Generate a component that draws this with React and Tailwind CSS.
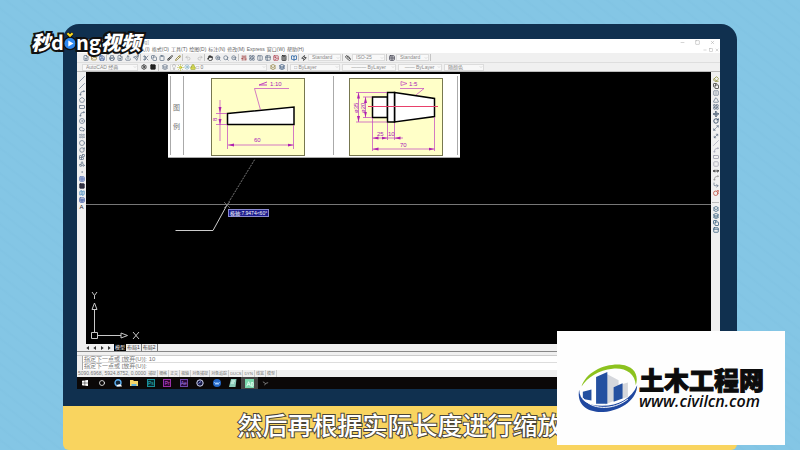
import React from "react";
import {
  FilePlus, FolderOpen, Save, Printer, FileSearch, Upload, Send, Scissors, Copy, Clipboard, Brush, Pencil,
  Undo2, Redo2, Hand, ZoomIn, Search, ZoomOut, Sliders, LayoutGrid, Table2, Columns2, Image, Calculator,
  BookOpen, Ruler, Settings, Layers, Lightbulb, Sun, Lock, Slash, Spline, Pentagon, RectangleHorizontal,
  Circle, Cloud, Waves, Shapes, Dot, Grid3x3, Square, Map, Sheet, Eraser, Triangle, FlipHorizontal, Move,
  RotateCw, Maximize2, MoveDiagonal, SquareDashed, CornerDownRight, Bomb, Minus, X, ChevronDown, Zap,
  MoveHorizontal, Layers2, PanelTop, Blocks, Grid2x2, CircleDot,
} from "lucide-react";

const cjk = "font-['Liberation_Sans','Noto_Sans_CJK_SC',sans-serif]";

function Tool({ icon: Icon, label, color = "text-[#66758a]" }) {
  return (
    <button type="button" aria-label={label} className={`flex h-[7px] w-[7px] shrink-0 items-center justify-center ${color}`}>
      <Icon className="size-[6px]" strokeWidth={3} />
    </button>
  );
}

function Divider() {
  return <span className="h-[7px] w-px shrink-0 bg-[#c4c4c4]" />;
}

function Combo({ label, value, width, center }) {
  return (
    <label className={`flex h-[7px] items-center border border-[#dcdcdc] bg-[#f8f8f8] ${width}`}>
      <select
        aria-label={label}
        className={`h-[5px] min-w-0 flex-1 appearance-none bg-transparent pl-[3px] text-[5px] leading-[5px] text-[#8a8a8a] ${center ? "text-center" : ""}`}
      >
        <option>{value}</option>
      </select>
      <ChevronDown className="size-[4px] text-[#aaa]" />
    </label>
  );
}

const menus = ["插入(I)", "格式(O)", "工具(T)", "绘图(D)", "标注(N)", "修改(M)", "Express", "窗口(W)", "帮助(H)"];

const drawTools = [
  [Slash, "直线"], [Slash, "构造线"], [Spline, "多段线"], [Pentagon, "正多边形"], [RectangleHorizontal, "矩形"],
  [Spline, "圆弧"], [CircleDot, "圆"], [Cloud, "修订云线"], [Waves, "样条曲线"], [Circle, "椭圆"], [RotateCw, "椭圆弧"],
  [Blocks, "插入块"], [Shapes, "创建块"], [Dot, "点"], [Grid3x3, "图案填充", "text-[#5c78b8]"], [Square, "渐变色", "text-[#223] [&_svg]:fill-[#334]"],
  [Map, "面域", "text-[#4a8cc0]"], [Sheet, "表格", "text-[#4560a8]"],
];

const modifyTools = [
  [Eraser, "删除", "text-[#8a8a30]"], [Copy, "复制", "text-[#333]"], [FlipHorizontal, "镜像"], [Triangle, "偏移"], [LayoutGrid, "阵列"],
  [Move, "移动", "text-[#1c3450]"], [RotateCw, "旋转", "text-[#1c3450]"], [Maximize2, "缩放"], [MoveDiagonal, "拉伸"], [Slash, "修剪", "text-[#aab]"],
  [Spline, "延伸", "text-[#aab]"], [RectangleHorizontal, "打断于点", "text-[#99a]"], [SquareDashed, "打断", "text-[#99a]"],
  [MoveHorizontal, "合并", "text-black"], [Spline, "倒角", "text-[#999]"], [CornerDownRight, "圆角"], [Bomb, "分解", "text-[#c04a3a]"],
];

const orderTools = [[Layers2, "前置"], [Layers, "后置"], [Copy, "置于对象之上"], [PanelTop, "置于对象之下"]];

function TitleAndMenu() {
  return (
    <header className="bg-white">
      <div className="flex h-[7px] items-center justify-between pl-16 pr-[5px] text-[5px] leading-[7px] text-[#999]">
        <span>wg]</span>
        <span className="flex gap-[10px]">
          <button type="button" aria-label="最小化"><Minus className="size-[5px]" /></button>
          <button type="button" aria-label="最大化"><Square className="size-[5px]" /></button>
          <button type="button" aria-label="关闭"><X className="size-[5px]" /></button>
        </span>
      </div>
      <div className="flex h-[7px] items-center justify-between pl-[58px] pr-px text-[5px] leading-[7px] text-[#666]">
        <nav className="flex gap-[2px]">
          {menus.map((m) => <button type="button" key={m}>{m}</button>)}
        </nav>
        <span className="flex gap-[2px] text-[#888]">
          <button type="button" aria-label="最小化图形"><Minus className="size-[4px]" /></button>
          <button type="button" aria-label="还原图形"><Square className="size-[4px]" /></button>
          <button type="button" aria-label="关闭图形"><X className="size-[4px]" /></button>
        </span>
      </div>
    </header>
  );
}

function Toolbars() {
  return (
    <div className="border-b border-[#bbb] bg-[#f0f0f0]">
      <div className="flex h-[10px] items-center gap-px border-b border-[#dedede] pl-[5px]">
        <Tool icon={FilePlus} label="新建" />
        <Tool icon={FolderOpen} label="打开" color="text-[#a38a3a]" />
        <Tool icon={Save} label="保存" color="text-[#3c5c9c]" />
        <Divider />
        <Tool icon={Printer} label="打印" />
        <Tool icon={FileSearch} label="打印预览" />
        <Tool icon={Upload} label="发布" />
        <Tool icon={Send} label="三维DWF" />
        <Divider />
        <Tool icon={Scissors} label="剪切" />
        <Tool icon={Copy} label="复制" />
        <Tool icon={Clipboard} label="粘贴" />
        <Tool icon={Brush} label="特性匹配" color="text-[#222]" />
        <Tool icon={Pencil} label="块编辑器" color="text-[#8a7a20]" />
        <Divider />
        <Tool icon={Undo2} label="放弃" color="text-[#bbb]" />
        <span className="w-[3px]" />
        <Tool icon={Redo2} label="重做" color="text-[#bbb]" />
        <Divider />
        <Tool icon={Hand} label="平移" color="text-[#222]" />
        <Tool icon={ZoomIn} label="实时缩放" />
        <Tool icon={Search} label="窗口缩放" />
        <Tool icon={ZoomOut} label="上一个" />
        <Divider />
        <Tool icon={Sliders} label="特性" color="text-[#a04040]" />
        <Tool icon={LayoutGrid} label="设计中心" />
        <Tool icon={Columns2} label="工具选项板" />
        <Tool icon={Table2} label="图纸集" />
        <Tool icon={Image} label="标记集" color="text-[#b04050]" />
        <Tool icon={Calculator} label="计算器" color="text-[#222]" />
        <Divider />
        <Tool icon={BookOpen} label="帮助" color="text-[#1d5ca0]" />
        <Divider />
        <Tool icon={Zap} label="文字样式" color="text-[#222]" />
        <Combo label="文字样式" value="Standard" width="w-[33px]" />
        <Divider />
        <Tool icon={Ruler} label="标注样式" color="text-[#222]" />
        <Combo label="标注样式" value="ISO-25" width="w-[33px]" />
        <Divider />
        <Tool icon={Grid2x2} label="表格样式" color="text-[#334]" />
        <Combo label="表格样式" value="Standard" width="w-[33px]" />
        <Divider />
      </div>
      <div className="flex h-[8px] items-center gap-[2px] pl-[5px]">
        <Combo label="工作空间" value="AutoCAD 经典" width="w-[56px]" />
        <Tool icon={Settings} label="工作空间设置" color="text-[#222]" />
        <Tool icon={Square} label="我的工作空间" color="text-[#222] [&_svg]:fill-[#222]" />
        <Divider />
        <Tool icon={Layers} label="图层特性" />
        <div className="flex h-[7px] w-[97px] items-center border border-[#dcdcdc] bg-[#f8f8f8]">
          <Lightbulb className="size-[6px] text-[#999]" />
          <Sun className="size-[7px] fill-[#e6e04a] text-[#a8b020]" />
          <Sun className="size-[6px] text-[#4a90b0]" />
          <Lock className="size-[6px] fill-[#d8d850] text-[#8a9a30]" />
          <label className="flex h-[5px] flex-1 items-center">
            <select aria-label="图层" className="h-[5px] flex-1 appearance-none bg-transparent text-[5px] leading-[5px] text-[#777]">
              <option>□ 0</option>
            </select>
            <ChevronDown className="size-[4px] text-[#aaa]" />
          </label>
        </div>
        <Tool icon={Layers2} label="置为当前" color="text-[#8a7a30]" />
        <Tool icon={Layers} label="上一个图层" color="text-[#2c4c74]" />
        <Divider />
        <Combo label="颜色" value="□ ByLayer" width="w-[50px]" />
        <Combo label="线型" value="——— ByLayer" width="w-[54px]" center />
        <Combo label="线宽" value="—— ByLayer" width="w-[44px]" center />
        <Combo label="打印样式" value="随颜色" width="w-[40px]" />
      </div>
    </div>
  );
}

function ReferenceDrawing() {
  return (
    <svg viewBox="0 0 292 84" className="absolute left-[82px] top-[2px] h-[84px] w-[292px]" fontFamily="Liberation Sans, Noto Sans CJK SC, sans-serif">
      <defs>
        <marker id="tip" viewBox="0 0 6 4" refX="6" refY="2" markerWidth="6" markerHeight="4" markerUnits="userSpaceOnUse" orient="auto-start-reverse">
          <path d="M0 0.5 6 2 0 3.5Z" fill="#b020b0" />
        </marker>
      </defs>
      <rect width="292" height="84" fill="#fff" />
      <path d="M0 83.5H292M2.5 2V81M15.5 2V81M165.5 2V81M289.5 2V81" stroke="#aaa" fill="none" />
      <g fontSize="7" fill="#777"><text x="5" y="36">图</text><text x="5" y="55">例</text></g>
      <g fill="#ffffc8" stroke="#77774f">
        <rect x="43.5" y="4.5" width="93" height="77" />
        <rect x="181.5" y="4.5" width="93" height="77" />
      </g>
      <g fill="#fff" stroke="#000" strokeWidth="1.5">
        <path d="M59.5 39.5 126 33V50.5H59.5Z" />
        <path d="M204.5 23H219.5V43.5H204.5Z" />
        <path d="M226.5 18.5 266.5 24.5V42.5L226.5 48Z" />
        <path d="M219.5 18.5H226.5V48H219.5Z" />
      </g>
      <path d="M200 32.5H270" stroke="#e8406a" />
      <g fill="none" stroke="#c040c0" strokeWidth="0.7">
        <path d="M121 14.5H86.5L92.5 36M48 39.5H59M48 50.5H59M59.5 51V75M125.5 51V75" />
        <path d="M52 26V39" markerEnd="url(#tip)" />
        <path d="M52 67V51M52 39V51" markerEnd="url(#tip)" />
        <path d="M60 71H125.5" markerStart="url(#tip)" markerEnd="url(#tip)" />
        <path d="M99 8 91 11H99" strokeWidth="1" />
        <path d="M232 14.5H256L248 21M188 18.5H219M188 48H219M195 23H204M195 43.5H204M204.5 44V77M219.5 49V66M226.5 49V66M266.5 43V77" />
        <path d="M190.5 18.5V48" markerStart="url(#tip)" markerEnd="url(#tip)" />
        <path d="M197.5 23V43.5" markerStart="url(#tip)" markerEnd="url(#tip)" />
        <path d="M204.5 64H219.5" markerStart="url(#tip)" markerEnd="url(#tip)" />
        <path d="M235 64H226.5" markerEnd="url(#tip)" />
        <path d="M219.5 64H226.5" />
        <path d="M204.5 75H266.5" markerStart="url(#tip)" markerEnd="url(#tip)" />
        <path d="M233 7.5V11.5L239 9.5Z" />
      </g>
      <g fill="#a818b8" fontSize="6">
        <text x="102" y="12">1:10</text>
        <text x="86" y="68">60</text>
        <text x="241" y="12">1:5</text>
        <text x="209" y="62">25</text>
        <text x="220" y="62">10</text>
        <text x="232" y="73">70</text>
        <text transform="translate(49 47) rotate(-90)">8</text>
        <text transform="translate(190 39) rotate(-90)">ø35</text>
        <text transform="translate(197 39) rotate(-90)">ø20</text>
      </g>
    </svg>
  );
}

function Canvas() {
  return (
    <main className="relative min-w-0 flex-1 overflow-hidden bg-black">
      <div className="absolute left-0 top-[132px] h-px w-full bg-[#777]" />
      <svg viewBox="0 0 200 170" className="absolute left-0 top-0 h-[170px] w-[200px]" fill="none">
        <path d="M89.500 158.500H127L141 133" stroke="#ccc" />
        <path d="M141 133 169 87" stroke="#777" strokeDasharray="2 1" />
        <path d="M138 130 144 136M144 130 138 136" stroke="#888" strokeWidth="0.7" />
      </svg>
      <ReferenceDrawing />
      <output className="absolute left-[142px] top-[137px] flex h-[8px] items-center whitespace-nowrap border border-[#8a8ad0] bg-[#1c1c8c] px-px text-[5px] leading-[6px] text-white">
        极轴:7.9474&lt;60°
      </output>
      <svg viewBox="0 0 60 54" className="absolute bottom-0 left-0 h-[54px] w-[60px]" fill="none" stroke="#c8c8c8">
        <path d="M5.500 42.500H11.500V48.500H5.500ZM8.500 42V19M12 45.500H35M6 19.500 8.500 13 11 19.500ZM35 43 41.500 45.500 35 48Z" />
        <path d="M6 2 8.500 5.500 11 2M8.500 5.500V9M47 42 53 49M53 42 47 49" />
      </svg>
    </main>
  );
}

function CommandArea() {
  return (
    <footer className="bg-[#f0f0f0] text-[#777]">
      <div className="flex h-[7px] items-center gap-[3px] pl-[9px] text-[5px] leading-[7px] text-[#333]">
        <span className="flex gap-[3px]">
          {["M4 0 0 3 4 6ZM4 1V5", "M4 0 0 3 4 6Z", "M1 0 5 3 1 6Z", "M1 0 5 3 1 6ZM1 1V5"].map((d, i) => (
            <button type="button" key={d} aria-label={`切换布局 ${i + 1}`}>
              <svg viewBox="0 0 5 6" className="size-[4px]" fill="#333"><path d={d} /></svg>
            </button>
          ))}
        </span>
        <span className="flex">
          <button type="button" className="bg-black px-px text-white">模型</button>
          <button type="button" className="border-r border-[#777] px-px">布局1</button>
          <button type="button" className="border-r border-[#777] px-px">布局2</button>
        </span>
      </div>
      <div className="h-[5px] border-b border-t border-b-[#ccc] border-t-[#888]" />
      <div className="ml-[5px] border-l border-[#aaa] bg-white text-[6px]">
        <p className="h-[7px] border-b border-[#ddd] pl-px leading-[6px]">指定下一点或 [放弃(U)]: 10</p>
        <input aria-label="命令行" defaultValue="指定下一点或 [放弃(U)]:" className="block h-[7px] w-full pl-px leading-[7px] outline-none" />
      </div>
      <div className="flex h-[7px] items-center gap-px pl-px text-[5px] leading-[7px]">
        <span className="whitespace-nowrap">5090.6968, 5924.8752, 0.0000</span>
        <span className="flex text-[4px]">
          {["捕捉", "栅格", "正交", "极轴", "对象捕捉", "对象追踪", "DUCS", "DYN", "线宽", "模型"].map((s) => (
            <button type="button" key={s} className="whitespace-nowrap border-r border-[#ccc] px-px">{s}</button>
          ))}
        </span>
      </div>
    </footer>
  );
}

function Adobe({ name, color }) {
  return <span className={`flex h-[8px] w-[8px] items-center justify-center border text-[5px] leading-[6px] ${color}`}>{name}</span>;
}

function Taskbar() {
  const apps = [
    ["开始", <svg viewBox="0 0 8 8" className="size-[6px]"><path fill="#fff" d="M0 1 3.600.5V3.700H0ZM4.200.4 8 0V3.700H4.200ZM0 4.300H3.600V7.500L0 7ZM4.200 4.300H8V8L4.200 7.600Z" /></svg>],
    ["搜索", <Circle className="size-[6px] text-white" strokeWidth={3} />],
    ["QQ浏览器", <svg viewBox="0 0 8 8" className="size-[8px]"><circle cx="4" cy="3.800" r="3" fill="#123" stroke="#5aaef0" strokeWidth="1.400" /><path d="M2.500 7.500Q2.800 5 5 5.500 7 4.800 8 7.500Z" fill="#fff" /></svg>],
    ["文件资源管理器", <svg viewBox="0 0 8 8" className="size-[8px]"><path d="M0 1H3L4 2H8V7H0Z" fill="#f4d568" /><path d="M1.500 5H6.500V7H1.500Z" fill="#5eb0dc" /></svg>],
    ["Photoshop", <Adobe name="Ps" color="border-[#1b8f98] bg-[#06282e] text-[#2cb5bd]" />],
    ["Premiere", <Adobe name="Pr" color="border-[#9a30a8] bg-[#2a0630] text-[#d050dd]" />],
    ["After Effects", <Adobe name="Ae" color="border-[#7048a8] bg-[#26083c] text-[#b080e8]" />],
    ["Cinema 4D", <svg viewBox="0 0 8 8" className="size-[8px]"><circle cx="4" cy="4" r="3.200" fill="#181b48" stroke="#d4d8f0" /><path d="M2.500 4.500 5 2.500" stroke="#8590e0" /></svg>],
    ["WPS", <svg viewBox="0 0 8 8" className="size-[8px]"><circle cx="4" cy="4" r="4" fill="#2468c8" /><path d="M1.500 3 3 5.500 4 3.500 5 5.500 6.500 3" stroke="#a8d0ff" fill="none" /></svg>],
    ["记事本", <svg viewBox="0 0 8 8" className="size-[8px]"><path d="M2 0H7.500L6.500 8H0Z" fill="#8bcab8" /><path d="M2.500 2H6M2 4H5" stroke="#e4fff6" /></svg>],
    ["AutoCAD", <svg viewBox="0 0 10 10" className="size-[9px]"><path d="M0 0H10V10H0Z" fill="#79d8ac" /><path d="M2 8 4 3 6 8M3 6H5.500M7 4V8H9V4Z" stroke="#eafff4" fill="none" /></svg>],
    ["录制", <svg viewBox="0 0 8 8" className="size-[7px]"><path d="M1 2 4 4 7 3M4 4 3 6" stroke="#888" fill="none" /></svg>],
  ];
  return (
    <div className="h-[12px] bg-[#0b0808]">
      <div className="grid h-full w-[197px] grid-cols-12">
        {apps.map(([name, icon]) => (
          <button type="button" key={name} aria-label={name} className={`flex items-center justify-center ${name === "AutoCAD" ? "bg-[#444]" : ""}`}>
            {icon}
          </button>
        ))}
      </div>
    </div>
  );
}

function VideoLogo() {
  return (
    <div className="absolute left-[31px] top-[29px] flex items-center whitespace-nowrap font-['Noto_Sans_CJK_SC',sans-serif] text-[20px] font-bold leading-[26px] text-white [-webkit-text-stroke:4px_#111] [paint-order:stroke_fill]">
      <span className="font-black italic">秒</span>
      <span>d</span>
      <svg viewBox="0 0 14 20" className="-mt-1 h-[20px] w-[12px] overflow-visible" role="img" aria-label="o" stroke="none">
        <circle cx="7" cy="14" r="8" fill="#111" />
        <circle cx="7" cy="14" r="6.500" fill="#2e88f0" />
        <path d="M5 10.500V17.500L11 14Z" fill="#fff" />
        <path d="M4 2 7 5 10 2" fill="none" stroke="#111" strokeWidth="4" />
        <path d="M4 2 7 5 10 2" fill="none" stroke="#f8d820" strokeWidth="2.500" />
      </svg>
      <span>ng</span>
      <span className="font-black italic">视频</span>
    </div>
  );
}

function SiteCard() {
  return (
    <a href="#civilcn" className="absolute bottom-[5px] right-[15px] flex h-[114px] w-[228px] items-center gap-px bg-[#fefefe] pl-[21px] text-[#0c0c0c]">
      <svg viewBox="0 0 180 148" className="h-[49px] w-[60px] shrink-0" aria-hidden="true">
        <path d="M81 27 122 49V106L81 122Z" fill="#d5d7dc" />
        <path d="M130 62 150 56V100L130 106Z" fill="#d5d7dc" />
        <path d="M14 84 40 77V110L14 106Z" fill="#2450a0" />
        <path d="M54 39 88 24V120H54Z" fill="#2450a0" />
        <path d="M107 70 134 58V104L107 114Z" fill="#2450a0" />
        <path d="M10 68C24 24 80-2 130 2 168 6 184 32 174 64 172 28 142 10 104 14 62 18 28 40 10 68Z" fill="#8cc21f" />
        <path d="M3 78C-6 124 30 148 76 145 136 140 178 104 178 64 162 104 122 126 72 126 28 126 4 110 3 78Z" fill="#2048a0" />
        <path d="M14 102C38 138 104 142 150 106" fill="none" stroke="#fff" strokeWidth="3" />
      </svg>
      <span className="whitespace-nowrap">
        <span className="block font-['Noto_Sans_CJK_SC',sans-serif] text-[25px] font-black leading-[25px] [-webkit-text-stroke:1px_#0c0c0c]">土木工程网</span>
        <span className="block font-['Open_Sans',sans-serif] text-[16px] font-semibold italic leading-[18px]">www.civilcn.com</span>
      </span>
    </a>
  );
}

export default function App() {
  return (
    <div className={`relative flex h-screen flex-col overflow-hidden bg-[#84c6e5] bg-[repeating-linear-gradient(38deg,transparent_0px,transparent_6px,#78bbdc30_8px,transparent_10px)] px-[63px] pt-6 ${cjk}`}>
      <section className="flex min-h-0 flex-1 flex-col rounded-t-2xl bg-[#10304f] px-[14px] pb-[17px] pt-[15px]">
        <div className="mr-[3px] flex min-h-0 flex-1 flex-col overflow-hidden">
          <TitleAndMenu />
          <Toolbars />
          <div className="flex min-h-0 flex-1">
            <aside className="w-[9px] shrink-0 bg-[#f0f0f0] pt-[3px]">
              <div className="flex h-[136px] flex-col items-center justify-between">
                {drawTools.map(([icon, label, color]) => <Tool key={label} icon={icon} label={label} color={color} />)}
                <button type="button" aria-label="多行文字" className="text-[6px] leading-[7px] text-[#222]">A</button>
              </div>
            </aside>
            <Canvas />
            <aside className="flex w-[9px] shrink-0 flex-col items-center gap-[6px] bg-[#f0f0f0] pt-[3px]">
              <div className="flex h-[121px] flex-col justify-between">
                {modifyTools.map(([icon, label, color]) => <Tool key={label} icon={icon} label={label} color={color} />)}
              </div>
              <div className="flex h-[32px] flex-col justify-between border-t border-[#bbb] pt-[2px]">
                {orderTools.map(([icon, label]) => <Tool key={label} icon={icon} label={label} color="text-[#2d5878]" />)}
              </div>
            </aside>
          </div>
          <CommandArea />
          <Taskbar />
        </div>
      </section>
      <p className="h-11 shrink-0 whitespace-nowrap rounded-b-[6px] bg-[#f9d45f] text-center font-['Noto_Sans_CJK_SC',sans-serif] text-[25px] font-medium leading-[36px] text-white [-webkit-text-stroke:2px_#4a4438] [paint-order:stroke_fill]">
        然后再根据实际长度进行缩放
      </p>
      <VideoLogo />
      <SiteCard />
    </div>
  );
}
